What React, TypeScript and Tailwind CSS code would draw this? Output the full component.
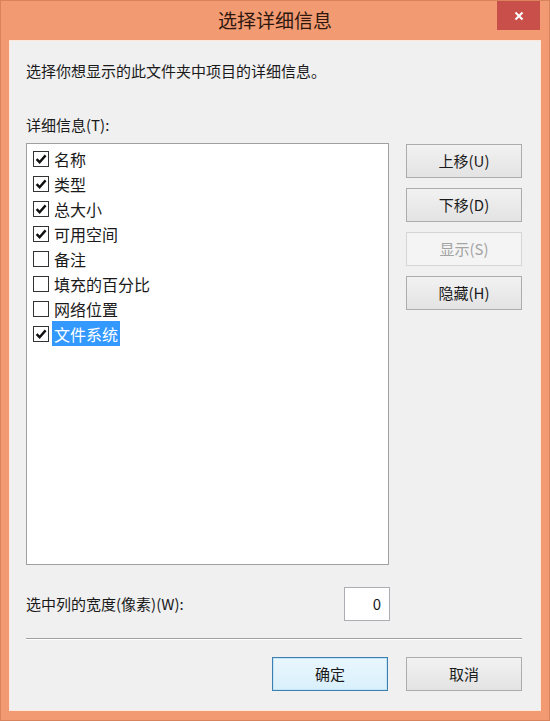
import type { ReactNode } from 'react';

const font = { fontFamily: '"Noto Sans CJK SC", "Noto Sans", sans-serif' };

const items = [
  { label: '名称', checked: true },
  { label: '类型', checked: true },
  { label: '总大小', checked: true },
  { label: '可用空间', checked: true },
  { label: '备注', checked: false },
  { label: '填充的百分比', checked: false },
  { label: '网络位置', checked: false },
  { label: '文件系统', checked: true, selected: true },
];

function CheckBox({ checked }: { checked: boolean }) {
  return (
    <span className="flex h-[16px] w-[16px] shrink-0 items-center justify-center border border-[#333] bg-white">
      {checked && (
        <svg viewBox="0 0 12 12" className="h-[12px] w-[12px]">
          <path d="M1.6 6.2 L4.6 9.2 L10.6 2.4" fill="none" stroke="#111" strokeWidth="2.4" />
        </svg>
      )}
    </span>
  );
}

function WinButton({
  children,
  disabled,
  primary,
}: {
  children: ReactNode;
  disabled?: boolean;
  primary?: boolean;
}) {
  const tone = disabled
    ? 'border-[#d5d5d5] bg-[#f4f4f4] text-[#a3a3a3]'
    : primary
      ? 'border-[#3c7fb1] bg-gradient-to-b from-[#eaf6fd] to-[#d9f0fc] text-[#1a1a1a] shadow-[inset_0_0_0_1px_#c4e5f6]'
      : 'border-[#acacac] bg-gradient-to-b from-[#f2f2f2] to-[#e3e3e3] text-[#1a1a1a]';
  return (
    <button
      type="button"
      className={`flex h-[34px] w-[116px] items-center justify-center border text-[15px] ${tone}`}
    >
      {children}
    </button>
  );
}

export default function App() {
  return (
    <div style={font} className="flex h-[721px] w-[550px] flex-col border border-[#d9835c] bg-[#f29a72]">
      <div className="relative flex h-[39px] shrink-0 items-center justify-center">
        <span className="text-[19px] text-[#2e170d]">选择详细信息</span>
        <div className="absolute right-[9px] top-0 flex h-[29px] w-[43px] items-center justify-center bg-[#c9504a]">
          <svg viewBox="0 0 10 10" className="h-[10px] w-[10px]">
            <path d="M1.5 1.5 L8.5 8.5 M8.5 1.5 L1.5 8.5" stroke="#fff" strokeWidth="2" />
          </svg>
        </div>
      </div>

      <div className="mx-[8px] mb-[9px] flex flex-1 flex-col border border-[#fde6da] bg-[#f0f0f0] pl-[16px] pr-[18px] text-[15px] text-[#1a1a1a]">
        <p className="mt-[20px] leading-[20px]">选择你想显示的此文件夹中项目的详细信息。</p>
        <p className="mt-[34px] leading-[20px]">详细信息(T):</p>

        <div className="mt-[8px] flex gap-[17px]">
          <div className="h-[422px] w-[364px] border border-[#a0a0a0] bg-white pl-[6px] pt-[2px] text-[16px]">
            {items.map((item) => (
              <div key={item.label} className="flex h-[25px] items-center">
                <CheckBox checked={item.checked} />
                <span
                  className={`ml-[3px] flex h-[25px] items-center px-[2px] ${
                    item.selected ? 'bg-[#3399ff] text-white' : ''
                  }`}
                >
                  {item.label}
                </span>
              </div>
            ))}
          </div>

          <div className="mt-[1px] flex flex-col gap-[10px]">
            <WinButton>上移(U)</WinButton>
            <WinButton>下移(D)</WinButton>
            <WinButton disabled>显示(S)</WinButton>
            <WinButton>隐藏(H)</WinButton>
          </div>
        </div>

        <div className="mt-[22px] flex w-[364px] items-center justify-between">
          <span>选中列的宽度(像素)(W):</span>
          <div className="flex h-[34px] w-[46px] items-center justify-end border border-[#abadb3] bg-white pr-[8px]">
            0
          </div>
        </div>

        <div className="mt-[17px] h-[2px] w-[496px] border-t border-[#a0a0a0] bg-white" />

        <div className="mt-[17px] flex w-[496px] justify-end gap-[18px]">
          <WinButton primary>确定</WinButton>
          <WinButton>取消</WinButton>
        </div>
      </div>
    </div>
  );
}
